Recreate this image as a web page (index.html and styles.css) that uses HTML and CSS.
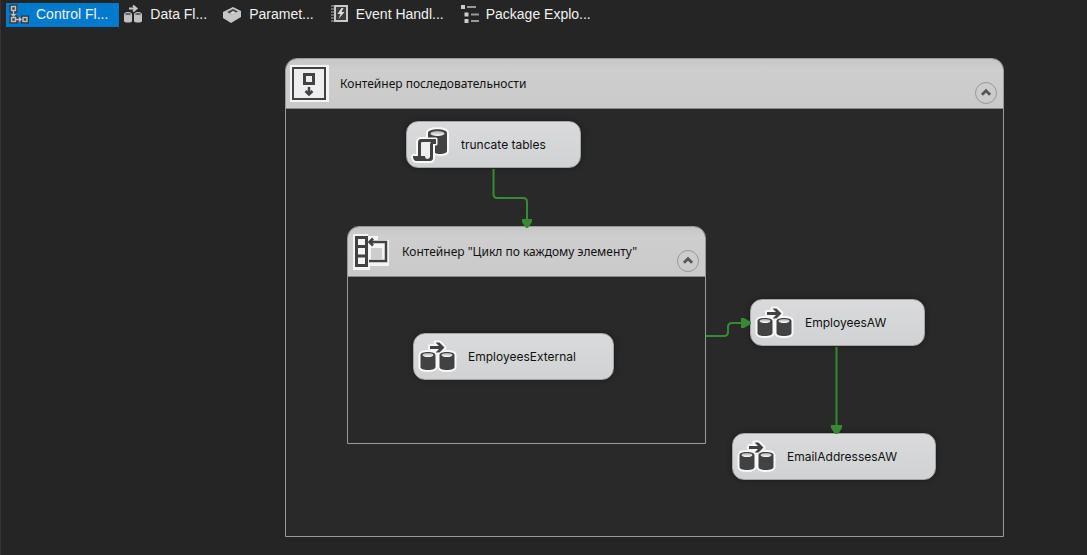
FILE: index.html
```html
<!DOCTYPE html>
<html lang="ru">
<head>
<meta charset="utf-8">
<title>Control Flow</title>
<link rel="stylesheet" href="styles.css">
</head>
<body>
<svg class="defs" aria-hidden="true">
  <defs>
    <linearGradient id="lid" x1="0" y1="0" x2="0" y2="1"><stop offset="0" stop-color="#aaa"/><stop offset="1" stop-color="#fff"/></linearGradient>
    <g id="flow-shapes">
      <path d="M2.500 16v12c0 2 3 3 7.500 3s7.500-1 7.500-3V16c0-2-3-3-7.500-3s-7.500 1-7.500 3zM21.500 16v12c0 2 3 3 7.500 3s7.500-1 7.500-3V16c0-2-3-3-7.500-3s-7.500 1-7.500 3z"/>
      <path d="M12 7h9l-3.500-3.500h4l5 5-5 5h-4L21 10h-9z"/>
    </g>
    <symbol id="flow" viewBox="0 0 39 36">
      <use href="#flow-shapes" fill="#f8f8f8" stroke="#f8f8f8" stroke-width="4" stroke-linejoin="round"/>
      <use href="#flow-shapes" fill="#424242"/>
      <ellipse cx="10" cy="16" rx="5.500" ry="2" fill="url(#lid)"/>
      <ellipse cx="29" cy="16" rx="5.500" ry="2" fill="url(#lid)"/>
    </symbol>
    <symbol id="chevron" viewBox="0 0 22 22"><path d="M6.500 13l4.500-4.500 4.500 4.500" fill="none" stroke="#555" stroke-width="3"/></symbol>
  </defs>
</svg>
<nav class="tabs" aria-label="Designer">
  <button class="tab active" type="button">
    <svg class="tab-icon" viewBox="0 0 20 20"><g fill="none" stroke="#333" stroke-width="4"><path d="M2.500 2.500h4v4h-4zM2.500 13.500h4v4h-4zM14 13.500h4v4h-4zM4.500 7v5M7 15.500h4"/></g><g fill="#444" stroke="#c0c0c0" stroke-width="1.500"><path d="M2.500 2.500h4v4h-4zM2.500 13.500h4v4h-4zM14 13.500h4v4h-4z"/><path d="M4.500 7v4M2.500 10l2 2 2-2M7 15.500h4M10 13.500l2 2-2 2" fill="none"/></g></svg>
    <span>Control Fl...</span>
  </button>
  <button class="tab" type="button">
    <svg class="tab-icon" viewBox="0 0 20 20"><path d="M1 10v7c0 2 8 2 8 0v-7zM11 10v7c0 2 8 2 8 0v-7z" fill="#c0c0c0"/><g fill="#555" stroke="#c8c8c8"><ellipse cx="5" cy="10" rx="3.500" ry="1.500"/><ellipse cx="15" cy="10" rx="3.500" ry="1.500"/></g><path d="M6 4.500h7M10 1.500l3.500 3-3.500 3" fill="none" stroke="#c8c8c8" stroke-width="2"/></svg>
    <span>Data Fl...</span>
  </button>
  <button class="tab" type="button">
    <svg class="tab-icon" viewBox="0 0 20 20"><path d="M1 8l10-5 8 4v6l-10 6-8-5z" fill="#c6c6c6"/><path d="M5 8l6-3 5 2.500-6 3z" fill="#444"/><path d="M8 9l3-2 3 1.500-4 2z" fill="#ddd"/></svg>
    <span>Paramet...</span>
  </button>
  <button class="tab" type="button">
    <svg class="tab-icon" viewBox="0 0 20 20"><path d="M6 2h12v15H6z" fill="#3c3c3c" stroke="#c8c8c8" stroke-width="2"/><path d="M2 2h4M2 5h4M2 8h4M2 11h4M2 14h4M2 17h4" stroke="#b0b0b0"/><path d="M12.500 4l-4 6h3l-2 5 6-7h-3l2-4z" fill="#ddd"/></svg>
    <span>Event Handl...</span>
  </button>
  <button class="tab" type="button">
    <svg class="tab-icon" viewBox="0 0 20 20"><g fill="#ccc"><path d="M2 1h4v4H2zM5.500 8.500h4v4h-4zM5.500 15h4v4h-4z"/></g><path d="M8 3h9M12 10.500h8M12 17h8" stroke="#999" stroke-width="2"/></svg>
    <span>Package Explo...</span>
  </button>
</nav>
<main class="canvas">
  <section class="box sequence">
    <header class="box-head">
      <svg class="node-icon" viewBox="0 0 39 38"><path fill="#f4f4f4" d="M0 0h39v37H0z"/><path d="M3 3h32v31H3z" fill="#eeeef0" stroke="#424242" stroke-width="2"/><path d="M14.500 9.500h9v9h-9z" fill="none" stroke="#424242" stroke-width="3"/><path d="M19 22v8M15.500 26l3.500 3.500 3.500-3.500" fill="none" stroke="#424242" stroke-width="2.500"/></svg>
      <h2 class="label">Контейнер последовательности</h2>
      <button class="toggle" type="button" aria-label="Свернуть"><svg viewBox="0 0 22 22"><use href="#chevron"/></svg></button>
    </header>
  </section>
  <section class="box foreach">
    <header class="box-head">
      <svg class="node-icon" viewBox="0 0 39 38"><path d="M1 1h15v2h10v4h11v26H18v4H1z" fill="#f4f4f4"/><path d="M21 15h9v11H19V15z" fill="#cdcdcd"/><path d="M4.500 4.500h10v28h-10zM4.500 13.500h10M4.500 23h10" fill="none" stroke="#424242" stroke-width="3"/><path d="M17 28h17V9H18M21 5.500L17.500 9l3.500 3.500" fill="none" stroke="#424242" stroke-width="2.500"/></svg>
      <h2 class="label">Контейнер "Цикл по каждому элементу"</h2>
      <button class="toggle" type="button" aria-label="Свернуть"><svg viewBox="0 0 22 22"><use href="#chevron"/></svg></button>
    </header>
  </section>
  <div class="task truncate">
    <svg class="node-icon" viewBox="0 0 39 38">
      <g id="script-shapes" fill="#f8f8f8" stroke="#f8f8f8" stroke-width="4" stroke-linejoin="round"><path d="M17 7c0-5 19-5 19 0v18c0 3-8 4-12 2V13h-7z"/><path d="M10 13h15v5h-3v14c0 2-1 3-3 3H6c-3 0-4-2-4-5h5V17c0-3 1-4 3-4z"/></g>
      <path d="M17 7c0-5 19-5 19 0v18c0 3-8 4-12 2V13h-7z" fill="#424242"/>
      <ellipse cx="26.500" cy="7.500" rx="7" ry="2.500" fill="url(#lid)"/>
      <path d="M10 13h15v5h-3v14c0 2-1 3-3 3H6c-3 0-4-2-4-5h5V17c0-3 1-4 3-4z" fill="#424242" stroke="#f8f8f8" stroke-width="3" paint-order="stroke" stroke-linejoin="round"/>
      <path d="M11 16h9c-1 1-1 2-1 4v10c0 2-1 3-3 3-1 0-2-1-2-3h-4V18c0-1 0-2 1-2z" fill="#f0f0f2"/>
    </svg>
    <span class="label">truncate tables</span>
  </div>
  <div class="task external">
    <svg class="node-icon" viewBox="0 0 39 36"><use href="#flow"/></svg>
    <span class="label">EmployeesExternal</span>
  </div>
  <div class="task employees">
    <svg class="node-icon" viewBox="0 0 39 36"><use href="#flow"/></svg>
    <span class="label">EmployeesAW</span>
  </div>
  <div class="task email">
    <svg class="node-icon" viewBox="0 0 39 36"><use href="#flow"/></svg>
    <span class="label">EmailAddressesAW</span>
  </div>
  <svg class="links" aria-hidden="true">
    <g fill="none" stroke="#388934" stroke-width="2">
      <path d="M493.500 139v25q0 4 4 4h25.500q4 0 4 4v20"/>
      <path d="M706 306h18q4 0 4-4v-5q0-4 4-4h10"/>
      <path d="M836.500 317v82"/>
    </g>
    <path d="M522 189h10v3l-4 6h-2l-4-6zM741 288h3l7 4v2l-7 4h-3zM831 395h11v3l-4 6h-3l-4-6z" fill="#388934"/>
  </svg>
</main>
</body>
</html>
```
FILE: styles.css
```css
* {
  box-sizing: border-box;
}

body {
  margin: 0;
  min-height: 100vh;
  display: flex;
  flex-direction: column;
  background: #252525;
  border-left: 1px solid #34343a;
}

.defs {
  position: absolute;
  width: 0;
  height: 0;
}

.tabs {
  display: flex;
  gap: 1px;
  padding: 3px 5px 3px;
}

.tab {
  display: flex;
  align-items: center;
  gap: 7px;
  height: 24px;
  padding: 0 11px 2px 3px;
  border: 0;
  background: transparent;
  color: #f1f1f1;
  font: 14px/20px "Liberation Sans", Arial, sans-serif;
  white-space: nowrap;
}

.tab.active {
  background: #007acc;
}

.tab-icon {
  flex: none;
  width: 20px;
  height: 20px;
}

/* Design surface: nodes are placed freely */
.canvas {
  position: relative;
  flex: 1;
  margin-left: -1px;
  min-height: 525px;
  overflow: hidden;
}

.box,
.task,
.links {
  position: absolute;
}

.box {
  border: 1px solid #999;
  border-radius: 12px 12px 0 0;
  background: #292929;
}

.box-head {
  position: relative;
  display: flex;
  align-items: center;
  gap: 11px;
  height: 50px;
  padding-left: 4px;
  border-bottom: 1px solid #888;
  border-radius: 11px 11px 0 0;
  background: linear-gradient(#c6c6c6, #cecece 20%, #cacaca);
}

.toggle {
  position: absolute;
  right: 6px;
  bottom: 4px;
  width: 22px;
  height: 22px;
  padding: 0;
  border: 1px solid #999;
  border-radius: 50%;
  background: transparent;
}

.toggle svg {
  display: block;
  width: 20px;
  height: 20px;
}

.node-icon {
  flex: none;
  width: 39px;
  height: 38px;
}

.label {
  margin: 0;
  color: #111;
  font: 400 12px/16px "Noto Sans", sans-serif;
  white-space: nowrap;
}

.task {
  display: flex;
  align-items: center;
  gap: 11px;
  height: 47px;
  padding-left: 4px;
  border: 1px solid #a4a6a6;
  border-radius: 12px;
  background: linear-gradient(#dadadc, #d0d2d3);
  box-shadow: 0 0 5px #1b1b1b;
}

.task .label {
  font-family: Inter, sans-serif;
}

.sequence {
  left: 285px;
  top: 28px;
  width: 719px;
  height: 479px;
}

.foreach {
  left: 347px;
  top: 196px;
  width: 359px;
  height: 218px;
}

.truncate {
  left: 406px;
  top: 91px;
  width: 175px;
}

.external {
  left: 413px;
  top: 303px;
  width: 201px;
}

.employees {
  left: 750px;
  top: 269px;
  width: 175px;
}

.email {
  left: 732px;
  top: 403px;
  width: 204px;
}

.links {
  inset: 0;
  width: 100%;
  height: 100%;
  pointer-events: none;
}
```
